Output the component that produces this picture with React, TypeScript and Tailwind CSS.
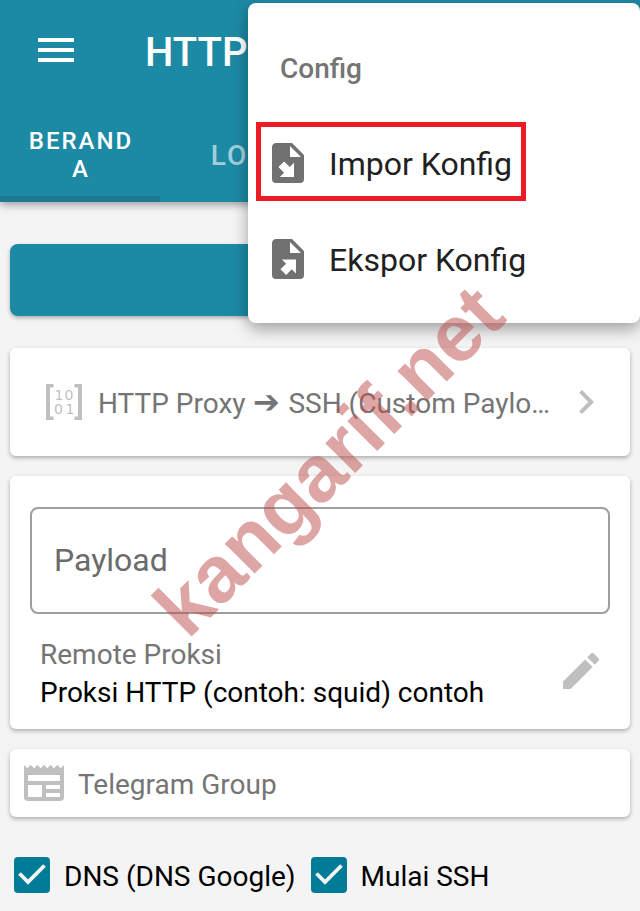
import { useState } from "react";
import type { ReactNode } from "react";

type IconProps = { d: string; className?: string };

const icons = {
  menu: "M3 18h18v-2H3v2zm0-5h18v-2H3v2zm0-7v2h18V6H3z",
  fileImport:
    "M6 2C4.89 2 4 2.9 4 4v16a2 2 0 0 0 2 2h12a2 2 0 0 0 2-2V8l-6-6M13 3.5L18.5 9H13M10.05 11.22l2.83 2.83L15 11.93V19H7.93l2.12-2.12-2.83-2.83",
  fileExport:
    "M6 2C4.89 2 4 2.9 4 4v16a2 2 0 0 0 2 2h12a2 2 0 0 0 2-2V8l-6-6M13 3.5L18.5 9H13M8.93 12.22H16v7.07l-2.12-2.12L11.05 20l-2.83-2.83 2.83-2.82",
  edit: "M3 17.25V21h3.75L17.81 9.94l-3.75-3.75L3 17.25zM20.71 7.04c.39-.39.39-1.02 0-1.41l-2.34-2.34c-.39-.39-1.02-.39-1.41 0l-1.83 1.83 3.75 3.75 1.83-1.83z",
  chevron: "M8.59 16.59L13.17 12 8.59 7.41 10 6l6 6-6 6z",
};

function Icon({ d, className = "" }: IconProps) {
  return (
    <svg viewBox="0 0 24 24" className={`size-12 shrink-0 ${className}`} fill="currentColor" fillRule="evenodd" aria-hidden="true">
      <path d={d} />
    </svg>
  );
}

function BinaryIcon() {
  return (
    <svg viewBox="0 0 36 36" className="size-9 shrink-0 text-[#bfbfbf]" fill="currentColor" aria-hidden="true">
      <path d="M0 0h7.5v3.4H4v29.2h3.5V36H0zM36 0h-7.5v3.4H32v29.2h-3.5V36H36z" />
      <g fontFamily="DejaVu Sans" fontSize="14" textAnchor="middle">
        <text x="13" y="15.5">1</text>
        <text x="23" y="15.5">0</text>
        <text x="12.5" y="30">0</text>
        <text x="24" y="30">1</text>
      </g>
    </svg>
  );
}

function NewsIcon() {
  return (
    <svg viewBox="0 0 40 36" className="h-9 w-10 shrink-0 text-[#bfbfbf]" fill="currentColor" fillRule="evenodd" aria-hidden="true">
      <path d="M0 0l3.3 3.3L6.7 0 10 3.3 13.3 0l3.4 3.3L20 0l3.3 3.3L26.7 0 30 3.3 33.3 0l3.4 3.3L40 0v32a4 4 0 0 1-4 4H4a4 4 0 0 1-4-4zM4 10v6h32v-6zM4 20v12h14V20zM22 20v4h14v-4zM22 28v4h14v-4z" />
    </svg>
  );
}

function Card({ children, className = "" }: { children: ReactNode; className?: string }) {
  return (
    <section className={`rounded-md bg-white shadow-[0_2px_4px_rgba(0,0,0,0.3)] ${className}`}>
      {children}
    </section>
  );
}

function Check({ label, defaultChecked }: { label: string; defaultChecked?: boolean }) {
  const [checked, setChecked] = useState(!!defaultChecked);
  return (
    <label className="flex items-center gap-3.5 text-black">
      <span className="relative size-9">
        <input
          type="checkbox"
          checked={checked}
          onChange={(e) => setChecked(e.target.checked)}
          className="block size-9 appearance-none rounded border-2 border-[#007c97] checked:bg-[#007c97]"
        />
        {checked && (
          <svg viewBox="0 0 36 36" className="pointer-events-none absolute inset-0" fill="none" stroke="#f4f4f4" strokeWidth="3.8" aria-hidden="true">
            <path d="M5.5 16.5l8.5 8.5L30.5 8.5" />
          </svg>
        )}
      </span>
      <span className="pt-1">{label}</span>
    </label>
  );
}

export default function App() {
  const [payload, setPayload] = useState("");

  return (
    <div className="relative min-h-screen overflow-hidden bg-[#f4f4f4] font-[Roboto,sans-serif] text-[28px] leading-[38px] text-[#757575]">
      <header className="bg-[#1c8aa5] text-white shadow-[0_3px_8px_rgba(0,0,0,0.35)]">
        <div className="flex h-[106px] items-center gap-[65px] px-8 pb-1.5">
          <button aria-label="Menu">
            <Icon d={icons.menu} />
          </button>
          <h1 className="pt-1.5 text-[40px] font-medium leading-12">HTTP</h1>
        </div>
        <nav className="grid h-24 grid-cols-4 font-medium leading-7 tracking-[2px]">
          <button className="border-b-6 border-[#1b7a90] pl-[26px] pr-6 pt-2 text-2xl leading-7 break-all">BERANDA</button>
          <button className="pt-1 text-white/60">LOG</button>
        </nav>
      </header>

      <main className="flex flex-col px-2.5 pt-[42px]">
        <button aria-label="Mulai" className="h-18 rounded-lg bg-[#1c8aa5] shadow-[0_2px_4px_rgba(0,0,0,0.3)]" />

        <Card className="mt-8">
          <button className="flex h-27 w-full items-center pl-9 pr-5 text-left">
            <BinaryIcon />
            <span className="ml-4 mr-2 min-w-0 flex-1 truncate pt-1">
              HTTP Proxy <span className="mx-px text-[32px] leading-none">➔</span> SSH (Custom Payload)
            </span>
            <Icon d={icons.chevron} className="text-[#bfbfbf]" />
          </button>
        </Card>

        <Card className="mt-5 px-5 pb-[17px] pt-[31px]">
          <input
            aria-label="Payload"
            placeholder="Payload"
            value={payload}
            onChange={(e) => setPayload(e.target.value)}
            className="block h-[107px] w-full rounded-lg border-2 border-[#9e9e9e] px-[22px] pb-0.5 text-[32px] text-black outline-none placeholder:text-[#6b6b6b]"
          />
          <div className="mt-[22px] flex items-center justify-between pl-2.5 pr-[5px]">
            <div>
              <p>Remote Proksi</p>
              <p className="text-black">Proksi HTTP (contoh: squid) contoh</p>
            </div>
            <button aria-label="Edit" className="pb-1.5">
              <Icon d={icons.edit} className="text-[#bfbfbf]" />
            </button>
          </div>
        </Card>

        <Card className="mt-5">
          <a href="#telegram" className="flex h-17 items-center gap-3.5 px-3.5">
            <NewsIcon />
            <span className="pt-1">Telegram Group</span>
          </a>
        </Card>

        <div className="mt-[37px] flex flex-wrap items-center gap-[15px] px-1">
          <Check label="DNS (DNS Google)" defaultChecked />
          <Check label="Mulai SSH" defaultChecked />
        </div>
      </main>

      <div className="absolute left-[248px] right-0 top-[3px] rounded-lg bg-white py-4 shadow-[0_6px_16px_rgba(0,0,0,0.35)]">
        <div className="flex h-24 items-center px-8 pt-1 font-medium">Config</div>
        <button className="relative flex h-24 w-full items-center gap-[17px] px-4 text-[32px] text-[#212121]">
          <Icon d={icons.fileImport} className="text-[#717171]" />
          <span className="pt-0.5">Impor Konfig</span>
          <span className="absolute bottom-2.5 left-2 top-[7px] w-[270px] border-5 border-[#ed1c24]" />
        </button>
        <button className="flex h-24 w-full items-center gap-[17px] px-4 text-[32px] text-[#212121]">
          <Icon d={icons.fileExport} className="text-[#717171]" />
          <span className="pt-0.5">Ekspor Konfig</span>
        </button>
      </div>

      <div className="pointer-events-none absolute left-[329px] top-[461px] -translate-x-1/2 -translate-y-1/2 -rotate-45 font-['Liberation_Sans',sans-serif] text-[80px] font-bold leading-none text-[#bd4b4b]/50">
        kangarif.net
      </div>
    </div>
  );
}
